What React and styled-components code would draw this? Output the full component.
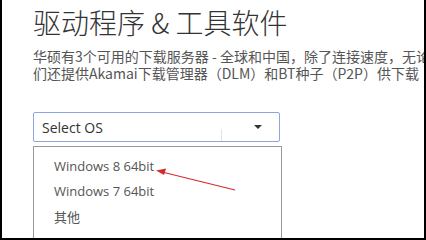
import React from 'react'
import styled, { createGlobalStyle } from 'styled-components'

const GlobalStyle = createGlobalStyle`
  html, body {
    margin: 0;
    padding: 0;
    background: #fff;
  }
`

const Frame = styled.div`
  width: 426px;
  height: 240px;
  box-sizing: border-box;
  border: 2px solid #000;
  border-top: none;
  overflow: hidden;
  position: relative;
  background: #fff;
  padding: 0 0 0 31px;
  font-family: "Open Sans", "Noto Sans CJK SC", sans-serif;
`

const Title = styled.h1`
  margin: 0;
  padding-top: 4px;
  font-family: "Noto Sans CJK SC", sans-serif;
  font-size: 28px;
  font-weight: 300;
  line-height: 36px;
  color: #333;
  white-space: nowrap;
`

const Desc = styled.div`
  margin-top: 8px;
  font-family: "Noto Sans CJK SC", sans-serif;
  font-size: 14px;
  line-height: 17px;
  color: #555;
  overflow: hidden;
`

const DescLine = styled.div`
  white-space: nowrap;
  overflow: hidden;
`

const SelectArea = styled.div`
  position: relative;
  margin-top: 30px;
  width: 247px;
`

const SelectBox = styled.div`
  box-sizing: border-box;
  height: 30px;
  border: 1px solid #8ea6df;
  border-radius: 2px;
  display: flex;
  align-items: center;
  padding: 0 0 0 8px;
  font-size: 14px;
  color: #333;
`

const SelectLabel = styled.span`
  flex: 1;
`

const Divider = styled.span`
  align-self: flex-end;
  width: 1px;
  height: 12px;
  background: #e4e4e4;
  margin-right: 32px;
`

const Caret = styled.span`
  width: 0;
  height: 0;
  border-left: 4px solid transparent;
  border-right: 4px solid transparent;
  border-top: 4px solid #333;
  margin-right: 17px;
`

const Menu = styled.ul`
  list-style: none;
  margin: 4px 0 0 0;
  padding: 7px 0 0 20px;
  box-sizing: border-box;
  width: 249px;
  height: 92px;
  border: 1px solid #9a9a9a;
  border-bottom: none;
  background: #fff;
  position: relative;
  z-index: 1;
`

const Item = styled.li`
  font-size: 13px;
  line-height: 25px;
  color: #555;
  font-family: ${({ $cjk }) => ($cjk ? '"Noto Sans CJK SC", sans-serif' : '"Open Sans", sans-serif')};
`

const Rule = styled.div`
  position: absolute;
  left: 248px;
  right: 0;
  top: 51px;
  height: 1px;
  background: #cfcfcf;
`

const Arrow = styled.svg`
  position: absolute;
  left: 0;
  top: 0;
  z-index: 2;
  pointer-events: none;
`

const App = () => {
  return (
    <>
      <GlobalStyle />
      <Frame>
        <Title>驱动程序 &amp; 工具软件</Title>
        <Desc>
          <DescLine>华硕有3个可用的下载服务器 - 全球和中国，除了连接速度，无论</DescLine>
          <DescLine>们还提供Akamai下载管理器（DLM）和BT种子（P2P）供下载</DescLine>
        </Desc>
        <SelectArea>
          <SelectBox>
            <SelectLabel>Select OS</SelectLabel>
            <Divider />
            <Caret />
          </SelectBox>
          <Rule />
          <Menu>
            <Item>Windows 8 64bit</Item>
            <Item>Windows 7 64bit</Item>
            <Item $cjk>其他</Item>
          </Menu>
        </SelectArea>
        <Arrow width="426" height="240" viewBox="0 0 426 240">
          <line x1="233" y1="190" x2="160" y2="172" stroke="#d42a2a" strokeWidth="1.2" />
          <polygon points="154,170.5 164,168.5 162,175" fill="#d42a2a" />
        </Arrow>
      </Frame>
    </>
  )
}

export default App
